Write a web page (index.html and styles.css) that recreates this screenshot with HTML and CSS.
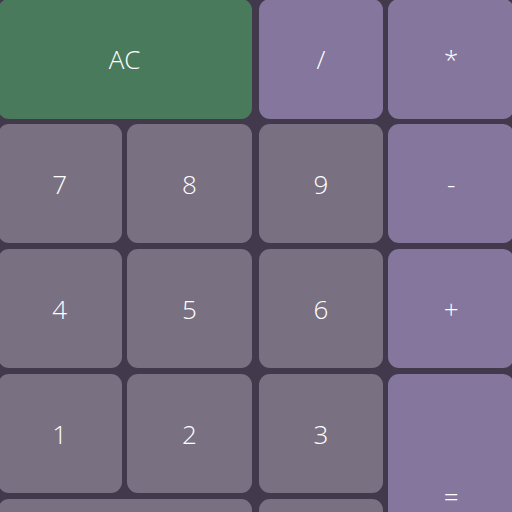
FILE: index.html
```html
<!DOCTYPE html>
<html>
<head>
<meta charset="utf-8">
<link rel="stylesheet" href="styles.css">
</head>
<body>
<div class="calc">
  <button class="key clear c12 r1">AC</button>
  <button class="key op c3 r1">/</button>
  <button class="key op c4 r1">*</button>
  <button class="key num c1">7</button>
  <button class="key num c2">8</button>
  <button class="key num c3">9</button>
  <button class="key op c4">-</button>
  <button class="key num c1">4</button>
  <button class="key num c2">5</button>
  <button class="key num c3">6</button>
  <button class="key op c4">+</button>
  <button class="key num c1">1</button>
  <button class="key num c2">2</button>
  <button class="key num c3">3</button>
  <button class="key op c4 tall">=</button>
  <button class="key num c12">0</button>
  <button class="key num c3">.</button>
</div>
</body>
</html>
```

FILE: styles.css
```css
html, body {
  margin: 0;
  padding: 0;
  background: #42394c;
  overflow: hidden;
  height: 512px;
}
.calc {
  display: grid;
  grid-template-columns: 124.5px 5px 124.7px 7px 124.6px 5px 126px;
  grid-auto-rows: 119.3px;
  row-gap: 5.7px;
  margin-left: -2.5px;
  margin-top: -0.8px;
  width: 530px;
}
.key {
  border: none;
  border-radius: 11px;
  color: #ffffff;
  font-family: "Open Sans", "Noto Sans", sans-serif;
  font-size: 26px;
  font-weight: 300;
  display: flex;
  align-items: center;
  justify-content: center;
  padding: 0;
  margin: 0;
}
.c1 { grid-column: 1; }
.c2 { grid-column: 3; }
.c3 { grid-column: 5; }
.c4 { grid-column: 7; }
.c12 { grid-column: 1 / 4; }
.r1 { grid-row: 1; }
.tall { grid-row: span 2; }
.num { background: #797182; }
.op { background: #84769c; }
.clear { background: #4a7a5c; }
```
